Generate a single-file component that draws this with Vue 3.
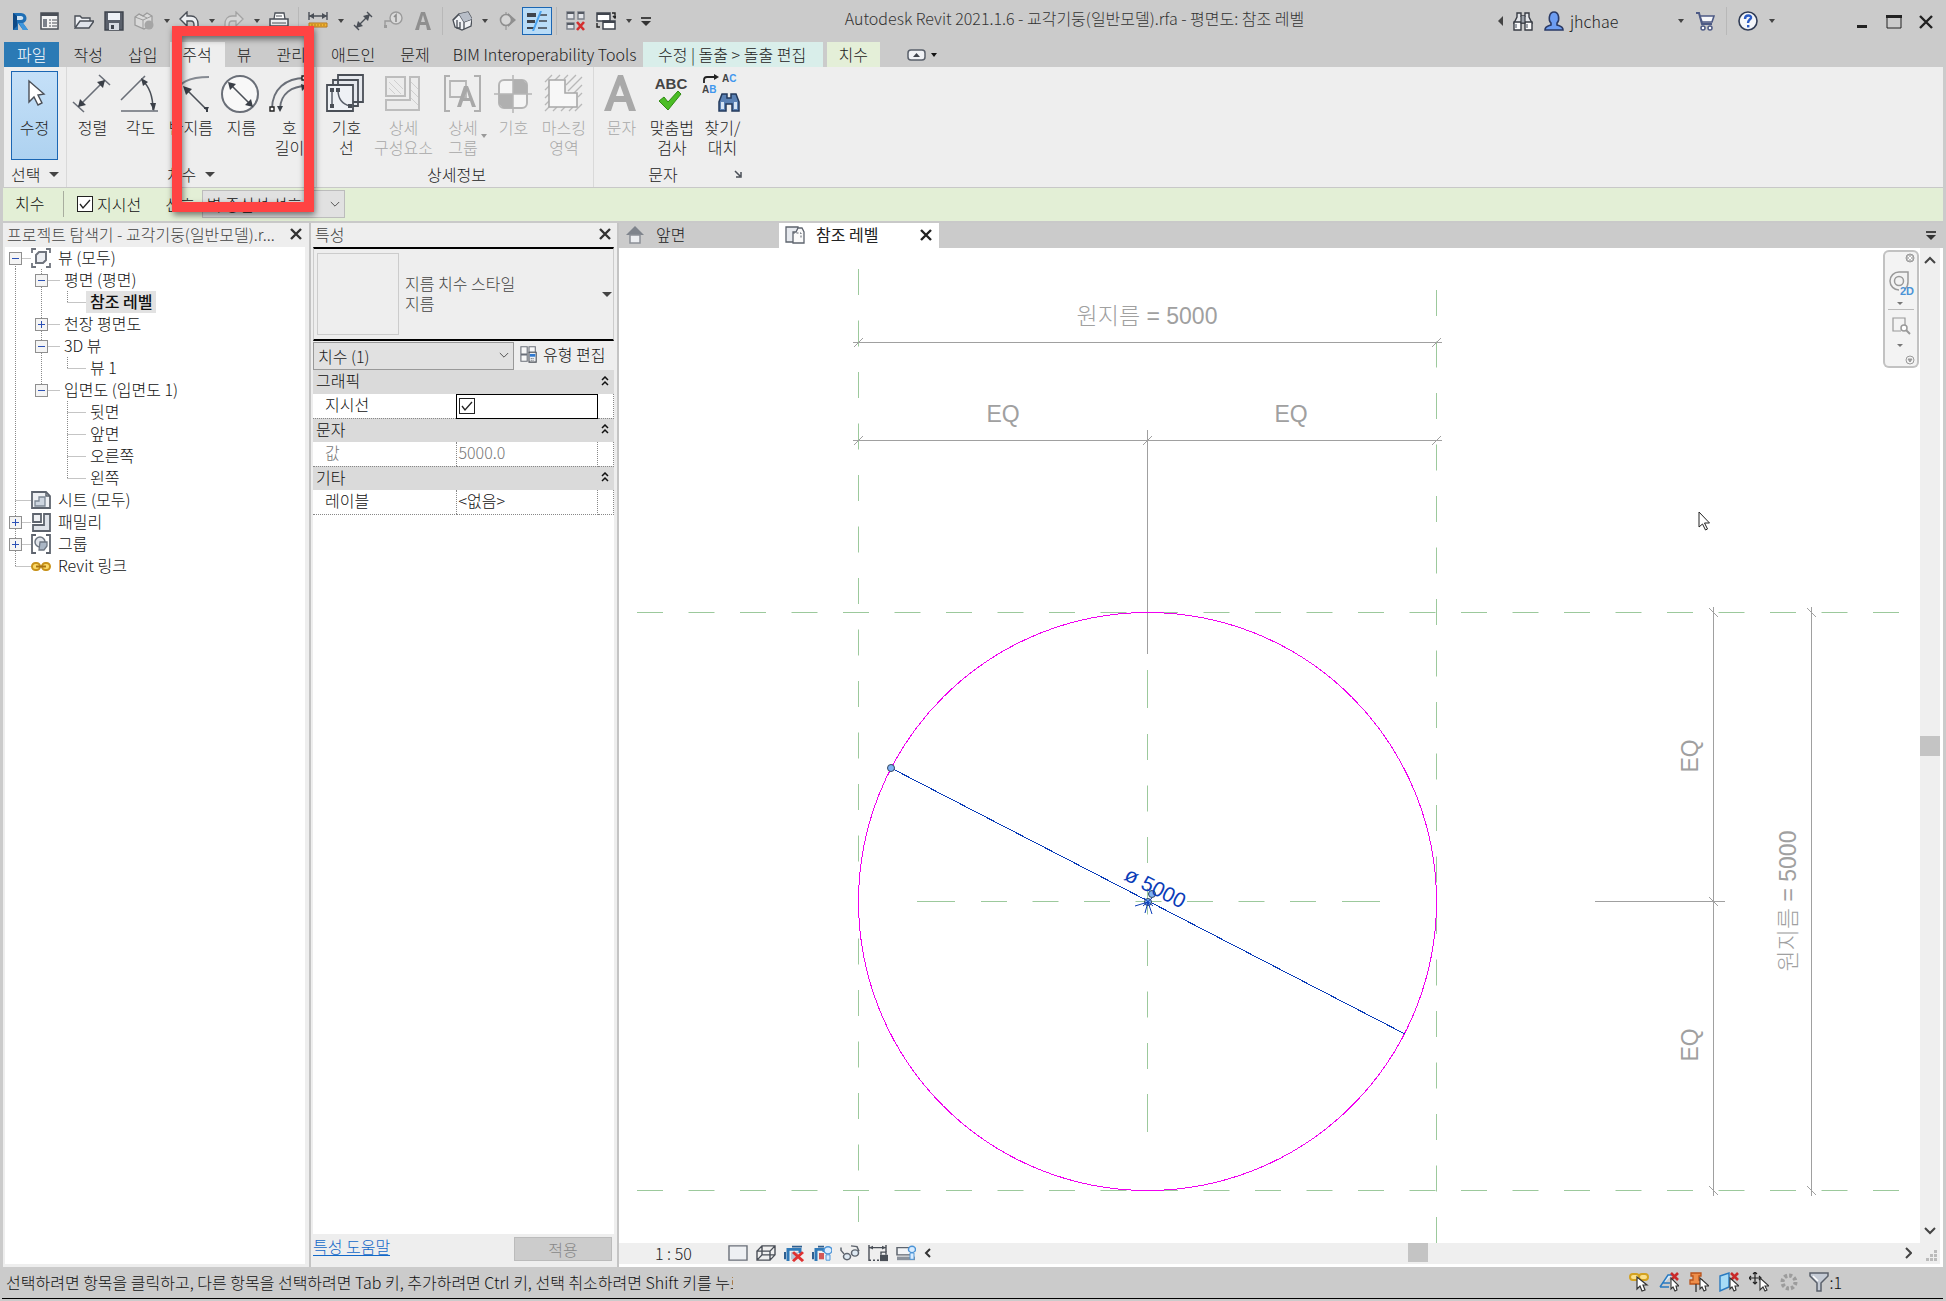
<script setup>
import { ref } from 'vue'

const glyphs = {
  revit: '<path d="M3 2h8c7 0 7 9 2 10l5 7h-5l-5-7v7H3z" fill="#1f6fb5"/><path d="M3 2l4 3v10l-4 4z" fill="#0f4a86"/><path d="M7 5h4c3 0 3 4 0 4H7z" fill="#cfe2f2"/><path d="M9 12l4 7h5l-5-7z" fill="#3f97dd"/>',
  window: '<path d="M1 2h17v16H1z" fill="#f4f4f4" stroke="#4a4f57" stroke-width="1.500"/><path d="M1 2h17v3H1z" fill="#4a4f57"/><path d="M3 8h4v8H3z" fill="#7b818b"/><path d="M9 9h2m1 0h5M9 12h2m1 0h5M9 15h2m1 0h5" stroke="#4a4f57"/>',
  open: '<path d="M1 16V5h5l2 2h8v3" fill="#eef0f4" stroke="#4a4f57" stroke-width="1.4"/><path d="M1 17l5-7h14l-5 7z" fill="#dfe3ea" stroke="#4a4f57" stroke-width="1.4"/>',
  save: '<path d="M1 1h18v18H1z" fill="#5a606b" stroke="#3f444d" stroke-width="1.4"/><path d="M4 2h12v7H4z" fill="#eef1f6"/><path d="M5 12h10v7H5z" fill="#d6dae1"/><path d="M7 14h3v4H7z" fill="#3f444d"/>',
  cloud: '<path d="M1 6l4-3 4 2 4-3 5 3v8l-8 5-9-4z" fill="#d9d9d9" stroke="#9b9b9b" stroke-width="1.3"/><path d="M1 6l8 3v9M9 9l9-4M5 3l8 4" fill="none" stroke="#9b9b9b"/><circle cx="15" cy="14" r="4.5" fill="#a5a5a5"/>',
  undo: '<path d="M1 8l7-7v4h4c4 0 7 3 7 8v4h-4v-3c0-3-1-4-3-4H8v5z" fill="#eef0f3" stroke="#4a4f57" stroke-width="1.4"/>',
  redo: '<path d="M19 8l-7-7v4H8c-4 0-7 3-7 8v4h4v-3c0-3 1-4 3-4h4v5z" fill="#d6d6d6" stroke="#a3a3a3" stroke-width="1.3"/>',
  print: '<path d="M5 8l1-6h9l1 6" fill="#fff" stroke="#4a4f57" stroke-width="1.3"/><path d="M1 8h18v7H1z" fill="#eceef1" stroke="#4a4f57" stroke-width="1.5"/><path d="M3 12h14M7 5h6" stroke="#4a4f57"/>',
  measure: '<path d="M1 5h18M1 1v8M19 1v8" stroke="#4a4f57" stroke-width="1.4"/><path d="M1 5l5-3v6zM19 5l-5-3v6z" fill="#4a4f57"/><path d="M1 12h18v4H1z" fill="#f2b632" stroke="#b7791f"/><path d="M4 13v2m3-2v2m3-2v2m3-2v2m3-2v2" stroke="#b7791f"/>',
  aligned: '<path d="M3 17L17 3M1 14l5 5M14 1l5 5" stroke="#4a4f57" stroke-width="1.4"/><path d="M3 17l2-7 5 5zM17 3l-2 7-5-5z" fill="#4a4f57"/>',
  tag: '<circle cx="13" cy="7" r="6" fill="#dadada" stroke="#9b9b9b" stroke-width="1.4"/><path d="M11 6l2-2v7" fill="none" stroke="#8d8d8d" stroke-width="1.6"/><path d="M8 10H2v5" fill="none" stroke="#9b9b9b" stroke-width="1.4"/><path d="M1 14h3v3H1z" fill="#9b9b9b"/>',
  letter: '<path d="M2 19L8 1h4l6 18h-4l-1-5H7l-1 5zM8 11h4l-2-7z" fill="#8f8f8f"/>',
  house: '<path d="M1 9l6-6 9-2 4 7-1 7-9 4-7-3z" fill="#f0f2f5" stroke="#4a4f57" stroke-width="1.3"/><path d="M1 9l6-6 5 8 8-3M12 11v7M5 9v8h3v-6" fill="none" stroke="#4a4f57" stroke-width="1.3"/><path d="M7 3l9-2 4 7-8 3z" fill="#b8bec8"/>',
  section: '<path d="M11 2l8 7-8 7z" fill="#8f8f8f"/><circle cx="9" cy="9" r="5.5" fill="#d6d6d6" stroke="#8f8f8f" stroke-width="1.6"/><path d="M9 1v3m0 11v4" stroke="#8f8f8f"/>',
  thin: '<path d="M0 2h9v4H0zM0 9h8v3H0zM0 16h7v2H0z" fill="#3f444d"/><path d="M13 4h7M12 10h8M11 17h9" stroke="#3f444d" stroke-width="1.6"/><path d="M14 0L6 20" stroke="#4aa3f0" stroke-width="2"/>',
  closeHidden: '<path d="M1 1h7v7H1zM12 1h6v7h-6zM1 12h7v6H1z" fill="#e4e6ea" stroke="#7a7f88" stroke-width="1.4"/><path d="M1 2h7M12 2h6M1 13h7" stroke="#555a63" stroke-width="2"/><path d="M11 11l7 8m0-8l-7 8" stroke="#d42f2f" stroke-width="2.6"/>',
  switchWin: '<path d="M1 2h13v8H1z" fill="#fff" stroke="#3f444d" stroke-width="1.5"/><path d="M1 3h13" stroke="#3f444d" stroke-width="2"/><path d="M7 10h12v8H7z" fill="#fff" stroke="#3f444d" stroke-width="1.5"/><path d="M7 11h12" stroke="#3f444d" stroke-width="2"/><path d="M16 2h3v5m-2-2l2 2 1-2M1 12v4h3" fill="none" stroke="#222" stroke-width="1.4"/>',
  binoc: '<path d="M4 6V2h4v3h4V2h4v4l3 6H1z" fill="#e3e5e9" stroke="#383c44" stroke-width="1.4"/><path d="M1 11h7v8H1zM12 11h7v8h-7z" fill="#fafafa" stroke="#383c44" stroke-width="1.400"/><path d="M8 5v7h4V5" fill="#9ea3ab" stroke="#383c44" stroke-width="1.200"/><path d="M3 13v4M14 13v4" stroke="#9ea3ab" stroke-width="2"/>',
  user: '<path d="M1 19c0-4 4-4 6-5v-2C4 9 5 1 10 1s6 8 3 11v2c2 1 6 1 6 5z" fill="#6d9df2" stroke="#2a3a66" stroke-width="1.6"/>',
  cart: '<path d="M1 2h3l3 11h10" fill="none" stroke="#4d5a85" stroke-width="2"/><path d="M5 5h14l-2 6H7z" fill="#f6f7fa" stroke="#4d5a85" stroke-width="1.6"/><circle cx="8" cy="17" r="2" fill="#fff" stroke="#4d5a85" stroke-width="1.5"/><circle cx="15" cy="17" r="2" fill="#fff" stroke="#4d5a85" stroke-width="1.5"/>',
  help: '<circle cx="10" cy="10" r="9" fill="#f4f6fa" stroke="#2f3b55" stroke-width="1.6"/><path d="M7 8c0-5 7-4 6-1-1 2-3 2-3 5" fill="none" stroke="#2a5bc4" stroke-width="2.4"/><path d="M9 14h2.400v2.400H9z" fill="#2a5bc4"/>',
  views: '<path d="M1 5V1h4M15 1h4v4M19 15v4h-4M5 19H1v-4" fill="none" stroke="#70757e" stroke-width="1.8"/><path d="M5 7l3-3h7v8l-3 3H5z" fill="#eceef2" stroke="#70757e" stroke-width="2"/>',
  sheet: '<path d="M1 2h14l4 4v12H1z" fill="#eef0f3" stroke="#5e646e" stroke-width="1.8"/><path d="M15 2v4h4" fill="none" stroke="#5e646e" stroke-width="1.5"/><path d="M4 16v-5h4V7h6v9z" fill="#cdd5df" stroke="#7c8794" stroke-width="1.3"/>',
  family: '<path d="M2 2h8v8H2z" fill="#eef0f3" stroke="#5e646e" stroke-width="1.8"/><path d="M13 2h6v17H2v-6h11z" fill="#dfe3e9" stroke="#5e646e" stroke-width="1.8"/>',
  group: '<path d="M5 1H1v18h4M15 1h4v18h-4" fill="none" stroke="#5e646e" stroke-width="1.8"/><circle cx="9" cy="8" r="5" fill="#dfe3e9" stroke="#6e7783" stroke-width="1.5"/><path d="M9 8h7v4l-3 4H8z" fill="#aab6c5" stroke="#6e7783" stroke-width="1.3"/>',
  link: '<rect x="1" y="7" width="8" height="7" rx="3.500" fill="#fbd968" stroke="#c8921a" stroke-width="2"/><rect x="11" y="7" width="8" height="7" rx="3.500" fill="#fbd968" stroke="#c8921a" stroke-width="2"/><path d="M5 10.500h10" stroke="#a87412" stroke-width="2"/>',
  home: '<path d="M10 1l9 9H1z" fill="#7f848c"/><path d="M5 10h10v8H5z" fill="#eceef1" stroke="#8c9097" stroke-width="1.5"/>',
  plan: '<path d="M1 2h12v15H1z" fill="#e7eaef" stroke="#5e646e" stroke-width="1.3"/><path d="M8 7h3l2-4h4l2 4v11H8z" fill="#fafafa" stroke="#5e646e" stroke-width="1.3"/><path d="M8 8h8v5" fill="none" stroke="#5e646e" stroke-dasharray="2 1.500"/>',
  editType: '<path d="M1 2h7v8H1zM10 2h7v6h-7zM1 11h7v7H1z" fill="#f7f7f7" stroke="#6a6f78" stroke-width="1.2"/><path d="M10 8h8v11h-8z" fill="#eceef1" stroke="#4a4f57" stroke-width="1.2"/><path d="M11 10h6v3h-6z" fill="#2f79d0"/><path d="M12 15h1m1 0h1m-3 2h1m1 0h1" stroke="#4a4f57"/>',
  detail: '<path d="M1 2h18v16H1z" fill="#eef0f3" stroke="#6a6f78" stroke-width="1.400"/>',
  style: '<path d="M1 8h13v10H1zM1 8l5-6h13v10l-5 6M14 8l5-6M6 2v10h13M6 12l-5 6" fill="none" stroke="#4a4f57" stroke-width="1.4"/>',
  crop: '<path d="M4 19V6h12v4" fill="none" stroke="#2f79b8" stroke-width="3"/><path d="M1 9v8M8 3h10" stroke="#2f5f90" stroke-width="2"/><path d="M7 9h7v8H7z" fill="#b9c7d8"/><path d="M9 9l10 10M19 9L9 19" stroke="#e03131" stroke-width="3"/>',
  cropShow: '<path d="M4 19V6h8v3" fill="none" stroke="#2f79b8" stroke-width="3"/><path d="M1 9v8M6 3h6" stroke="#2f5f90" stroke-width="2"/><path d="M7 10h5v7H7z" fill="#d35757"/><circle cx="16" cy="7" r="4" fill="#d9ecff" stroke="#4b93d6" stroke-width="1.5"/><path d="M14 12h4v6h-4z" fill="#d9ecff" stroke="#4b93d6"/>',
  glasses: '<path d="M1 4v3l3 4M11 2l6 1 2 5" fill="none" stroke="#5e646e" stroke-width="1.500"/><circle cx="7" cy="14" r="3.500" fill="#dfeaf3" stroke="#5e646e" stroke-width="1.500"/><circle cx="15" cy="10" r="3.500" fill="#dfeaf3" stroke="#5e646e" stroke-width="1.500"/>',
  lockDim: '<path d="M1 1v18M18 1v8M1 4h17" stroke="#4a4f57" stroke-width="1.400"/><path d="M1 4l4-2v4zM18 4l-4-2v4z" fill="#4a4f57"/><path d="M1 18h10" stroke="#4a4f57" stroke-width="1.500" stroke-dasharray="2 2"/><path d="M12 12h8v7h-8z" fill="#4a4f57"/><path d="M13 12V9h5v3" fill="none" stroke="#4a4f57" stroke-width="1.400"/>',
  constraint: '<path d="M1 4h14v8H1z" fill="#f2f4f7" stroke="#5e646e" stroke-width="1.500"/><path d="M1 14h18v4H1z" fill="#8b929c"/><circle cx="16" cy="6" r="3.500" fill="#d9ecff" stroke="#4b93d6" stroke-width="1.500"/><path d="M14 10h4v7h-4z" fill="#d9ecff" stroke="#4b93d6"/>',
  selLink: '<rect x="1" y="2" width="9" height="6" rx="3" fill="#fbe08a" stroke="#d3a11f" stroke-width="2"/><rect x="10" y="2" width="9" height="6" rx="3" fill="#fbe08a" stroke="#d3a11f" stroke-width="2"/><path d="M8 5v12l3-3 2 5 3-1-2-5h4z" fill="#fff" stroke="#333" stroke-width="1.200"/>',
  selUnder: '<path d="M1 15L9 3h4M1 15h9M3 11h8" fill="#d9efff" stroke="#2a7ac0" stroke-width="1.500"/><path d="M12 1l7 7m0-7l-7 7" stroke="#c92a2a" stroke-width="2.600"/><path d="M12 6v11l2-2 2 4 2-1-1-4h3z" fill="#fff" stroke="#333" stroke-width="1.100"/>',
  selPin: '<path d="M2 1h10v3h-2v4h3v4H1V8h3V4H2z" fill="#ee8e4a" stroke="#b9531b" stroke-width="1.300"/><path d="M7 12v8" stroke="#444" stroke-width="1.500"/><path d="M11 6v11l2-2 2 4 2-1-1-4h4z" fill="#fff" stroke="#333" stroke-width="1.100"/>',
  selFace: '<path d="M1 4l9-3v14l-9 4z" fill="#a8dcf7" stroke="#2a7ac0" stroke-width="1.400"/><path d="M12 1l7 7m0-7l-7 7" stroke="#c92a2a" stroke-width="2.600"/><path d="M11 6v11l2-2 2 4 2-1-1-4h4z" fill="#fff" stroke="#333" stroke-width="1.100"/>',
  drag: '<path d="M6 0v12M0 6h12M4 2l2-2 2 2M4 10l2 2 2-2M2 4L0 6l2 2M10 4l2 2-2 2" fill="none" stroke="#222" stroke-width="1.200"/><path d="M11 6v12l3-3 2 4 2-1-2-4h4z" fill="#fff" stroke="#333" stroke-width="1.100"/>',
  busy: '<circle cx="10" cy="10" r="6.500" fill="none" stroke="#9c9c9c" stroke-width="4" stroke-dasharray="3 2"/>',
  filter: '<path d="M1 1h18v3l-7 7v8H8v-8L1 4z" fill="#c5cbd5" stroke="#5a606b" stroke-width="1.500"/><path d="M4 4l5 5" stroke="#fff" stroke-width="1.500"/>',
}

const big = {
  arrow: '<path d="M14 7l0 21 5-5 4 8 4-2-4-8 6-1z" fill="#fff" stroke="#4a4f57" stroke-width="1.400"/>',
  align: '<path d="M6 33L33 6M1 28l11 10M27 1l11 10" stroke="#6a6f78" stroke-width="1.600"/><path d="M6 33l2-8 6 6zM33 6l-2 8-6-6z" fill="#3a3f47"/>',
  angle: '<path d="M1 26L25 2M1 37h37" stroke="#6a6f78" stroke-width="1.600" fill="none"/><path d="M22 6c8 7 11 17 11 30" stroke="#4a4f57" stroke-width="1.600" fill="none"/><path d="M21 4l7 4-5 4zM30 29h6l-2 8z" fill="#3a3f47"/>',
  radius: '<path d="M4 20C7 8 19 3 38 3" fill="none" stroke="#858a92" stroke-width="2"/><path d="M14 14l22 22" stroke="#4a4f57" stroke-width="1.600"/><path d="M12 12l9 3-6 6zM38 33h-5v2h2v3h2v-3z" fill="#3a3f47"/>',
  diameter: '<circle cx="19" cy="20" r="18" fill="#f8f8f8" stroke="#6a6f78" stroke-width="2"/><path d="M9 10l21 21" stroke="#4a4f57" stroke-width="1.600"/><path d="M7 8l8 2-6 6zM32 33l-8-2 6-6z" fill="#3a3f47"/>',
  arc: '<path d="M3 35C3 15 17 4 36 4M11 34C12 20 22 12 38 12" fill="none" stroke="#6a6f78" stroke-width="1.800"/><path d="M1 33h4v4H1zM33 2h4v4h-4z" fill="#fff" stroke="#222" stroke-width="1.400"/><path d="M8 32h6l-3 6zM32 10l6 2-5 5z" fill="#3a3f47"/>',
  symline: '<path d="M12 1h25v27H12zM7 6h25v26H7z" fill="#e6e9ee" stroke="#4a4f57" stroke-width="1.800"/><path d="M1 11h26v26H1z" fill="#eef1f5" stroke="#4a4f57" stroke-width="1.800"/><path d="M6 15v16M12 16c0 8 4 14 12 16" stroke="#5a606b" stroke-width="1.500" fill="none"/><path d="M4 14h4v4H4zM4 30h4v4H4zM10 14h4v4h-4zM22 30h4v4h-4z" fill="#4a4f57"/><path d="M15 6h2m3 0h2m3 0h2M10 6h0" stroke="#4a4f57" stroke-width="2"/>',
  component: '<path d="M3 3h19v19H3zM27 3h9v33H3V26h24z" fill="#ececec" stroke="#bdbdbd" stroke-width="2"/><path d="M6 8l12 12M6 14l6 6M11 6l9 9M28 8l7 7M28 16l7 7M28 24l7 7" stroke="#cfcfcf"/>',
  dgroup: '<path d="M7 2H2v35h5M31 2h6v35h-6" fill="none" stroke="#b0b0b0" stroke-width="2"/><path d="M7 7h16v16H7z" fill="none" stroke="#b5b5b5" stroke-width="1.800"/><path d="M14 33l7-21h4l8 21h-4l-2-6h-7l-2 6zM21 24h5l-2-7z" fill="#a8a8a8"/>',
  symbol: '<rect x="6" y="6" width="28" height="28" rx="5" fill="#f5f5f5" stroke="#b5b5b5" stroke-width="2"/><path d="M20 6h10l4 4v10H20zM6 20h14v14H10l-4-4z" fill="#b0b0b0"/><path d="M20 1v38M1 20h38" stroke="#b5b5b5" stroke-width="1.500"/>',
  mask: '<path d="M1 8l7-7M1 16L16 1M8 9l8-8M20 5l4-4M22 11L32 1M24 17L38 3M28 21l10-10M34 23l4-4M1 24l4-4M1 31l4-4M1 37l8-8M9 37l4-4M17 37l4-4M25 37l4-4M31 37l7-7" stroke="#b8b8b8" stroke-width="1.300"/><path d="M5 6h16v13h12v14H5z" fill="#f7f7f7" stroke="#a8a8a8" stroke-width="1.600"/>',
  text: '<path d="M3 37L17 1h5l13 36h-7l-3-9H13l-3 9zM15 22h8l-4-11z" fill="#a9a9a9"/>',
  spell: '<path d="M7 27l5-4 4 5L26 17l3 3-13 16z" fill="#4bbd25" stroke="#2f8a12" stroke-width="1"/>',
  find: '<path d="M2 9V6c0-2 1-3 3-3h9" fill="none" stroke="#222" stroke-width="1.800"/><path d="M12 0l5 3-5 3z" fill="#222"/><path d="M20 20h5v4h4v-4h5l3 8v9h-7v-7h-6v7h-7v-9z" fill="#5b82b5" stroke="#233a5c" stroke-width="1.500"/><path d="M19 28h3v7h-3zM32 28h3v7h-3z" fill="#d5e4f4"/>',
}

const quick = [
  { t: 'icon', g: 'revit' }, { t: 'icon', g: 'window' }, { t: 'space' },
  { t: 'icon', g: 'open' }, { t: 'icon', g: 'save' }, { t: 'icon', g: 'cloud' }, { t: 'drop' },
  { t: 'icon', g: 'undo' }, { t: 'drop' }, { t: 'icon', g: 'redo' }, { t: 'drop' }, { t: 'icon', g: 'print' }, { t: 'sep' },
  { t: 'icon', g: 'measure' }, { t: 'drop' }, { t: 'icon', g: 'aligned' }, { t: 'icon', g: 'tag' }, { t: 'icon', g: 'letter' }, { t: 'sep' },
  { t: 'icon', g: 'house' }, { t: 'drop' }, { t: 'icon', g: 'section' }, { t: 'icon', g: 'thin', on: true }, { t: 'sep' },
  { t: 'icon', g: 'closeHidden' }, { t: 'icon', g: 'switchWin' }, { t: 'drop' }, { t: 'more' },
]

const tabs = [
  { n: '파일', c: 'file' }, { n: '작성' }, { n: '삽입' }, { n: '주석', c: 'current' }, { n: '뷰' }, { n: '관리' },
  { n: '애드인' }, { n: '문제' }, { n: 'BIM Interoperability Tools', c: 'bim' },
  { n: '수정 | 돌출 > 돌출 편집', c: 'modify' }, { n: '치수', c: 'dims' },
]

const panels = [
  { n: '선택', drop: true, c: 'select', tools: [{ g: 'arrow', l: ['수정'], on: true }] },
  { n: '치수', drop: true, c: 'dimension', tools: [
    { g: 'align', l: ['정렬'] }, { g: 'angle', l: ['각도'] }, { g: 'radius', l: ['반지름'], size: 'mid' }, { g: 'diameter', l: ['지름'] }, { g: 'arc', l: ['호', '길이'] }] },
  { n: '상세정보', c: 'detail', tools: [
    { g: 'symline', l: ['기호', '선'] }, { g: 'component', l: ['상세', '구성요소'], off: true, size: 'wide' }, { g: 'dgroup', l: ['상세', '그룹'], off: true, more: true, size: 'mid' },
    { g: 'symbol', l: ['기호'], off: true }, { g: 'mask', l: ['마스킹', '영역'], off: true, size: 'mid' }] },
  { n: '문자', c: 'text', launch: true, tools: [
    { g: 'text', l: ['문자'], off: true }, { g: 'spell', l: ['맞춤법', '검사'], size: 'mid' }, { g: 'find', l: ['찾기/', '대치'] }] },
]

// Guide cells: v = line through, m/p = minus/plus box, t = branch, e = last branch, '' = blank
const tree = [
  { cells: ['mf'], icon: 'views', n: '뷰 (모두)' },
  { cells: ['v', 'm'], n: '평면 (평면)' },
  { cells: ['v', 'v', 'e'], n: '참조 레벨', active: true },
  { cells: ['v', 'p'], n: '천장 평면도' },
  { cells: ['v', 'm'], n: '3D 뷰' },
  { cells: ['v', 'v', 'e'], n: '뷰 1' },
  { cells: ['v', 'ml'], n: '입면도 (입면도 1)' },
  { cells: ['v', '', 't'], n: '뒷면' },
  { cells: ['v', '', 't'], n: '앞면' },
  { cells: ['v', '', 't'], n: '오른쪽' },
  { cells: ['v', '', 'e'], n: '왼쪽' },
  { cells: ['t'], icon: 'sheet', n: '시트 (모두)' },
  { cells: ['p'], icon: 'family', n: '패밀리' },
  { cells: ['p'], icon: 'group', n: '그룹' },
  { cells: ['e'], icon: 'link', n: 'Revit 링크' },
]
const guide = (c) => {
  if (!c) return ''
  if (c === 'v') return 'M12.5 0V22'
  const stem = c === 'mf' ? 'M12.5 11V22' : c === 'e' || c === 'ml' ? 'M12.5 0V11' : 'M12.5 0V22'
  return stem + 'M12.5 11.500H31'
}

const leader = ref(true)
const showLeader = ref(true)
const viewIcons = ['detail', 'style', 'crop', 'cropShow', 'glasses', 'lockDim', 'constraint']
const statusIcons = ['selLink', 'selUnder', 'selPin', 'selFace', 'drag', 'busy', 'filter']
</script>

<template>
  <div class="app">
    <header class="titlebar">
      <div class="quick">
        <template v-for="(q, i) in quick" :key="i">
          <button v-if="q.t === 'icon'" class="qbtn" :class="{ on: q.on }"><svg width="20" height="20" viewBox="0 0 20 20" fill="none" v-html="glyphs[q.g]" /></button>
          <button v-else-if="q.t === 'drop'" class="qdrop"><i class="caret" /></button>
          <span v-else-if="q.t === 'sep'" class="qsep" />
          <span v-else-if="q.t === 'space'" class="qspace" />
          <button v-else class="qmore"><i class="caret-bar" /></button>
        </template>
      </div>
      <h1 class="title">Autodesk Revit 2021.1.6 - 교각기둥(일반모델).rfa - 평면도: 참조 레벨</h1>
      <div class="account">
        <button class="back"><i class="caret-left" /></button>
        <button class="acc"><svg width="20" height="20" viewBox="0 0 20 20" fill="none" v-html="glyphs.binoc" /></button>
        <button class="acc user"><svg width="20" height="20" viewBox="0 0 20 20" fill="none" v-html="glyphs.user" /><span>jhchae</span></button>
        <button class="qdrop"><i class="caret" /></button>
        <button class="acc"><svg width="20" height="20" viewBox="0 0 20 20" fill="none" v-html="glyphs.cart" /></button>
        <span class="qsep" />
        <button class="acc"><svg width="20" height="20" viewBox="0 0 20 20" fill="none" v-html="glyphs.help" /></button>
        <button class="qdrop"><i class="caret" /></button>
      </div>
      <div class="winbtns">
        <button><svg width="16" height="16"><path d="M3 12h10v3H3z" fill="#222" /></svg></button>
        <button><svg width="16" height="16"><path d="M1 3h14v12H1z" fill="none" stroke="#222" /><path d="M0 2h16v3H0z" fill="#222" /></svg></button>
        <button><svg width="16" height="16"><path d="M2 3l12 12M14 3L2 15" stroke="#222" stroke-width="2.400" /></svg></button>
      </div>
    </header>

    <nav class="tabs">
      <button v-for="t in tabs" :key="t.n" class="tab" :class="t.c">{{ t.n }}</button>
      <button class="ribbon-toggle">
        <svg width="30" height="14" viewBox="0 0 30 14"><rect x="1" y="2" width="17" height="10" rx="3" fill="#f0f2f6" stroke="#5a606b" stroke-width="1.500" /><path d="M6 9l3.500-4L13 9z" fill="#3f444d" /><path d="M24 5h6l-3 4z" fill="#111" /></svg>
      </button>
    </nav>

    <section class="ribbon">
      <div v-for="p in panels" :key="p.n" class="panel" :class="p.c">
        <div class="tools">
          <button v-for="t in p.tools" :key="t.g" class="tool" :class="[t.size, { on: t.on, off: t.off }]" :disabled="t.off">
            <svg width="40" height="40" viewBox="0 0 40 40" fill="none">
              <g v-html="big[t.g]" />
              <text v-if="t.g === 'spell'" x="19" y="15" class="abc" text-anchor="middle">ABC</text>
              <g v-if="t.g === 'find'" class="ab"><text x="20" y="8">A<tspan fill="#3f97ee">C</tspan></text><text x="0" y="19">A<tspan fill="#3f97ee">B</tspan></text></g>
            </svg>
            <span v-for="l in t.l" :key="l">{{ l }}</span>
            <i v-if="t.more" class="caret more" />
          </button>
        </div>
        <div class="panel-name">
          <span>{{ p.n }}</span><i v-if="p.drop" class="caret big" />
          <svg v-if="p.launch" class="launch" width="8" height="8"><path d="M1 1l5 5M7 2v5H2" fill="none" stroke="#4a4f57" stroke-width="1.500" /></svg>
        </div>
      </div>
    </section>

    <section class="options">
      <strong class="ctx">치수</strong>
      <label class="check"><input v-model="leader" type="checkbox"><span>지시선</span></label>
      <label class="prefer"><span>선호:</span>
        <select><option>벽 중심선 선호</option></select>
      </label>
    </section>

    <main class="work">
      <aside class="browser">
        <div class="dock-head"><span>프로젝트 탐색기 - 교각기둥(일반모델).r...</span><button class="x"><svg width="14" height="14"><path d="M2 2l10 10M12 2L2 12" stroke="#333" stroke-width="2.400" /></svg></button></div>
        <ul class="tree">
          <li v-for="r in tree" :key="r.n + r.cells.length">
            <svg v-for="(c, i) in r.cells" :key="i" class="cell" width="26" height="22" viewBox="0 0 26 22">
              <path :d="guide(c)" fill="none" stroke="#8a8a8a" stroke-dasharray="1 1" />
              <g v-if="c[0] === 'm' || c[0] === 'p'">
                <rect x="6.500" y="5.500" width="12" height="12" fill="#f4f4f4" stroke="#8f8f8f" />
                <path d="M9 11.500h7" stroke="#2b50b5" /><path v-if="c[0] === 'p'" d="M12.500 8v7" stroke="#2b50b5" />
              </g>
            </svg>
            <svg v-if="r.icon" class="ticon" width="20" height="20" viewBox="0 0 20 20" fill="none" v-html="glyphs[r.icon]" />
            <span class="node" :class="{ active: r.active }">{{ r.n }}</span>
          </li>
        </ul>
      </aside>

      <aside class="props">
        <div class="dock-head"><span>특성</span><button class="x"><svg width="14" height="14"><path d="M2 2l10 10M12 2L2 12" stroke="#333" stroke-width="2.400" /></svg></button></div>
        <button class="type">
          <span class="thumb" />
          <span class="type-name">지름 치수 스타일<br>지름</span>
          <i class="caret big" />
        </button>
        <div class="filter">
          <select aria-label="치수"><option>치수 (1)</option></select>
          <button class="edit"><svg width="18" height="20" viewBox="0 0 20 20" fill="none" v-html="glyphs.editType" /><span>유형 편집</span></button>
        </div>
        <table class="grid">
          <colgroup><col class="c1"><col><col class="c3"></colgroup>
          <tbody>
            <tr class="grp"><th colspan="2">그래픽</th><td><svg width="8" height="10"><path d="M1 4l3-3 3 3M1 9l3-3 3 3" fill="none" stroke="#111" stroke-width="1.500" /></svg></td></tr>
            <tr><th><label for="leader">지시선</label></th><td class="focus"><input id="leader" v-model="showLeader" type="checkbox"></td><td /></tr>
            <tr class="grp"><th colspan="2">문자</th><td><svg width="8" height="10"><path d="M1 4l3-3 3 3M1 9l3-3 3 3" fill="none" stroke="#111" stroke-width="1.500" /></svg></td></tr>
            <tr class="dim"><th>값</th><td>5000.0</td><td /></tr>
            <tr class="grp"><th colspan="2">기타</th><td><svg width="8" height="10"><path d="M1 4l3-3 3 3M1 9l3-3 3 3" fill="none" stroke="#111" stroke-width="1.500" /></svg></td></tr>
            <tr><th>레이블</th><td>&lt;없음&gt;</td><td /></tr>
          </tbody>
        </table>
        <div class="void" />
        <footer class="apply"><a href="#">특성 도움말</a><button disabled>적용</button></footer>
      </aside>

      <section class="view">
        <div class="doc-tabs">
          <button class="doc"><svg width="20" height="20" viewBox="0 0 20 20" fill="none" v-html="glyphs.home" /><span>앞면</span></button>
          <div class="doc open"><svg width="20" height="20" viewBox="0 0 20 20" fill="none" v-html="glyphs.plan" /><span>참조 레벨</span><button class="x"><svg width="14" height="14"><path d="M2 2l10 10M12 2L2 12" stroke="#222" stroke-width="2.400" /></svg></button></div>
          <button class="doc-more"><i class="caret-bar" /></button>
        </div>
        <div class="stage">
          <svg class="drawing" viewBox="619 248 1301 995" preserveAspectRatio="xMidYMid meet" fill="none">
            <g class="ref-line">
              <path d="M858.500 269V1222" /><path d="M1436.500 290V1243" />
              <path d="M637 612.500H1899" /><path d="M637 1190.500H1899" />
              <path d="M981 901.500H1316" /><path d="M1147.500 734V1070" />
              <path class="solid" d="M917 901.500H955M1342 901.500H1380M1147.500 670V708M1147.500 1094V1132" />
            </g>
            <g class="dim-line">
              <path d="M853 342.500H1442M853 440.500H1442M1147.500 430V654" />
              <path d="M1713.500 607V1196M1811.500 607V1196M1595 901.500H1725" />
              <path d="M854 347l9-9M1432 347l9-9M854 445l9-9M1143 445l9-9M1432 445l9-9" />
              <path d="M1709 608l9 9M1807 608l9 9M1709 897l9 9M1709 1186l9 9M1807 1186l9 9" />
            </g>
            <g class="dim-text">
              <text x="1147" y="324">원지름 = 5000</text>
              <text x="1003" y="422">EQ</text><text x="1291" y="422">EQ</text>
              <text transform="translate(1698 756) rotate(-90)">EQ</text>
              <text transform="translate(1698 1045) rotate(-90)">EQ</text>
              <text transform="translate(1796 901) rotate(-90)">원지름 = 5000</text>
            </g>
            <circle class="crisp" cx="1147.500" cy="901.500" r="289" stroke="#f000f0" />
            <path class="crisp" d="M891 768L1405 1034" stroke="#0a3cb8" />
            <g stroke="#33475f" fill="#7fb2f5"><circle cx="891" cy="768" r="3.500" /><circle cx="1148" cy="902" r="3.500" /><circle cx="1152" cy="894" r="3.500" /></g>
            <path d="M1148 902l-13 4M1148 902l4 12M1148 902l-3 11M1144 898l9 8M1152 898l-9 8" stroke="#0a3cb8" />
            <text class="dia" transform="translate(1152 894) rotate(27)">ø 5000</text>
            <path d="M1699 512v15l3.500-3 3 6 2-1-3-6h5z" fill="#fff" stroke="#222" />
          </svg>
          <div class="navbar">
            <svg width="36" height="118" viewBox="0 0 36 118" fill="none" stroke="#9a9a9a">
              <circle cx="27" cy="8" r="4" fill="#bdbdbd" /><path d="M25 6l4 4m0-4l-4 4" stroke="#fff" />
              <path d="M16 22h9v10a9 9 0 0 1-3 7M16 22a9 9 0 1 0 0 18" stroke-width="1.500" /><circle cx="16" cy="31" r="4.500" stroke-width="1.500" />
              <path d="M14 52h6l-3 3z" fill="#777" stroke="none" /><path d="M5 59.500h26" stroke="#bbb" />
              <path d="M18 81H10V68h12v7" stroke-width="1.200" /><circle cx="21" cy="78" r="3" fill="#fff" stroke-width="1.500" /><path d="M23 80l4 4" stroke-width="2" />
              <path d="M14 94h6l-3 3z" fill="#777" stroke="none" /><circle cx="27" cy="110" r="4" /><path d="M25 109h4l-2 3z" fill="#999" />
              <text x="17" y="45" class="two-d">2D</text>
            </svg>
          </div>
        </div>
        <div class="vscroll">
          <svg width="12" height="8"><path d="M1 7l5-5 5 5" fill="none" stroke="#444" stroke-width="2" /></svg>
          <i class="vthumb" />
          <svg width="12" height="8"><path d="M1 1l5 5 5-5" fill="none" stroke="#444" stroke-width="2" /></svg>
        </div>
        <div class="viewbar">
          <button class="scale">1 : 50</button>
          <button v-for="g in viewIcons" :key="g" class="vbtn"><svg width="20" height="18" viewBox="0 0 20 20" preserveAspectRatio="none" fill="none" v-html="glyphs[g]" /></button>
          <svg class="lt" width="8" height="12"><path d="M6 2L2 6l4 4" fill="none" stroke="#333" stroke-width="2" /></svg>
          <div class="hscroll"><i class="hthumb" /></div>
          <svg width="8" height="12"><path d="M2 1l5 5-5 5" fill="none" stroke="#444" stroke-width="2" /></svg>
        </div>
        <svg class="grip" width="12" height="12"><path d="M8 0h3v3H8zM4 4h3v3H4zM8 4h3v3H8zM0 8h3v3H0zM4 8h3v3H4zM8 8h3v3H8z" fill="#bbb" /></svg>
      </section>
    </main>

    <footer class="status">
      <p class="hint">선택하려면 항목을 클릭하고, 다른 항목을 선택하려면 Tab 키, 추가하려면 Ctrl 키, 선택 취소하려면 Shift 키를 누르십시오.</p>
      <div class="status-icons">
        <button v-for="g in statusIcons" :key="g" class="sbtn"><svg width="20" height="20" viewBox="0 0 20 20" fill="none" v-html="glyphs[g]" /></button>
      </div>
      <span class="count">:1</span>
    </footer>

    <div class="marker" />
  </div>
</template>

<style>
body { margin: 0; background: #cbcbcb; }
</style>

<style scoped>
* { box-sizing: border-box; }
.app { position: relative; display: flex; flex-direction: column; height: 100vh; min-height: 700px; background: #cbcbcb; color: #222; font: 300 16px/20px 'Noto Sans CJK KR', sans-serif; overflow: hidden; }
button { font: inherit; color: inherit; padding: 0; border: 0; background: none; display: flex; align-items: center; justify-content: center; white-space: nowrap; }
select { font: inherit; color: inherit; }
svg { display: block; flex: none; }
input[type='checkbox'] { appearance: none; width: 16px; height: 16px; margin: 0; background: #fff; border: 1px solid #222; flex: none; }
input[type='checkbox']:checked { background: #fff url("data:image/svg+xml,%3Csvg xmlns='http://www.w3.org/2000/svg' viewBox='0 0 14 14'%3E%3Cpath d='M2 7l3 4 7-8' fill='none' stroke='%23222' stroke-width='1.300'/%3E%3C/svg%3E") center / 14px 14px no-repeat; }
.caret { width: 0; height: 0; border: 3px solid transparent; border-top: 4px solid #444; border-bottom: 0; flex: none; }
.caret.big { border-width: 5px 5px 0; }
.caret-left { border: 5px solid transparent; border-right-color: #444; border-left: 0; }
.caret-bar { width: 10px; height: 9px; border-top: 2px solid #444; display: flex; align-items: flex-end; }
.caret-bar::after { content: ''; border: 5px solid transparent; border-top-color: #333; border-bottom: 0; }

.titlebar { display: flex; flex: none; height: 42px; align-items: center; padding-right: 12px; }
.quick { display: flex; align-items: center; padding-left: 5px; }
.qbtn { width: 30px; height: 28px; }
.qbtn.on { background: #b9dcf7; border: 1px solid #1b66b3; }
.qdrop { width: 15px; height: 28px; }
.qsep { width: 1px; height: 28px; margin: 0 4px; background: #b8b8b8; }
.qspace { width: 4px; }
.qmore { width: 20px; height: 28px; }
.title { flex: 1; margin: 0; font: inherit; line-height: 36px; height: 42px; text-align: center; white-space: nowrap; color: #333; }
.account { display: flex; align-items: center; }
.account .qdrop { margin-right: 1px; }
.account .qsep { margin: 0 5px; }
.back { width: 14px; }
.acc { width: 32px; height: 28px; }
.acc.user { width: 134px; padding-left: 5px; justify-content: flex-start; gap: 6px; }
.winbtns { display: flex; gap: 16px; margin-left: 74px; }
.winbtns button { width: 16px; height: 28px; }

.tabs { display: flex; flex: none; height: 25px; padding-left: 4px; }
.tab { padding: 0 13px 2px 12px; height: 25px; }
.tab.file { background: #2b7ab5; color: #fff; padding: 0 13px 2px; margin-right: 2px; }
.tab.current { background: #eee; }
.tab.bim { padding: 0 6px 2px 10px; }
.tab.modify { background: #d9eeea; width: 180px; }
.tab.dims { background: #e4efd8; margin-left: 4px; padding: 0 12px 2px; }
.ribbon-toggle { margin-left: 27px; }

.ribbon { display: flex; flex: none; height: 121px; margin: 0 3px 0 4px; background: #eee; border-bottom: 1px solid #c8c8c8; }
.panel { display: flex; flex-direction: column; justify-content: space-between; padding: 4px 3px 1px; border-right: 1px solid #d9d9d9; }
.panel:last-child { border-right: 0; }
.panel.select { padding: 4px 7px 1px; }
.panel.dimension { padding-left: 1px; }
.panel.detail { padding: 4px 3px 1px 5px; }
.tools { display: flex; }
.tool { position: relative; width: 48px; height: 89px; flex-direction: column; justify-content: flex-start; padding-top: 3px; }
.tool svg { margin-bottom: 3px; }
.tool.mid { width: 53px; }
.tool.wide { width: 66px; }
.tool.off { color: #a8a8a8; }
.tool.on { width: 47px; background: linear-gradient(#c5e0f8, #aed2f0); border: 1px solid #1b66b3; padding-top: 2px; }
.tool .more { position: absolute; right: 2px; top: 63px; border-top-color: #999; }
.abc { font: 700 15px 'Liberation Sans', sans-serif; fill: #444; }
.ab { font: 700 10px 'Liberation Sans', sans-serif; fill: #444; }
.panel-name { position: relative; display: flex; align-items: center; justify-content: center; gap: 9px; height: 24px; }
.panel.text .panel-name { padding-right: 18px; }
.launch { position: absolute; right: 4px; top: 8px; }

.options { display: flex; flex: none; align-items: center; height: 35px; margin: 0 3px; padding-bottom: 1px; background: #e3efd6; border-bottom: 2px solid #c9c9c9; color: #111; }
.ctx { font-weight: inherit; width: 61px; height: 26px; padding-left: 12px; line-height: 24px; border-right: 1px solid #a8ad9f; }
.check { display: flex; align-items: center; gap: 4px; margin-left: 13px; }
.prefer { display: flex; align-items: center; gap: 3px; margin-left: 24px; }
.prefer select, .filter select { appearance: none; border: 1px solid #bcbcbc; padding: 0 24px 0 4px; height: 28px; background: #e1e1e1 url("data:image/svg+xml,%3Csvg xmlns='http://www.w3.org/2000/svg' viewBox='0 0 12 8'%3E%3Cpath d='M1 1l5 5 5-5' fill='none' stroke='%23555' stroke-width='1.200'/%3E%3C/svg%3E") right 4px center / 10px 7px no-repeat; }
.prefer select { width: 143px; }

.work { flex: 1; display: flex; min-height: 0; }
.browser { flex: none; width: 307px; margin-left: 3px; display: flex; flex-direction: column; background: #eee; padding: 0 4px 3px 2px; border-right: 1px solid #c4c4c4; }
.dock-head { display: flex; flex: none; justify-content: space-between; align-items: center; height: 24px; padding: 0 2px 2px; white-space: nowrap; color: #444; }
.tree { flex: 1; margin: 0; padding: 0; list-style: none; background: #fff; color: #111; }
.tree li { display: flex; align-items: center; height: 22px; margin-left: -2px; }
.cell { overflow: visible; }
.ticon { margin-left: 2px; position: relative; background: #fff; }
.node { margin-left: 5px; padding: 0 4px 2px; line-height: 20px; white-space: nowrap; position: relative; }
.ticon + .node { margin-left: 3px; }
.node.active { background: #e2e2e2; font-weight: 500; }

.props { flex: none; width: 309px; display: flex; flex-direction: column; background: #eee; padding: 0 3px 0 2px; border-right: 2px solid #c4c4c4; border-left: 1px solid #c4c4c4; }
.type { flex: none; height: 94px; border: 1px solid #ccc; border-top: 2px solid #000; border-bottom: 2px solid #000; justify-content: flex-start; gap: 6px; padding: 0 1px 0 3px; text-align: left; color: #444; }
.thumb { width: 82px; height: 82px; border: 1px solid #ccc; }
.type-name { flex: 1; padding-bottom: 2px; }
.filter { display: flex; flex: none; height: 29px; align-items: center; gap: 6px; }
.filter select { width: 201px; border-color: #999; }
.edit { gap: 5px; color: #111; padding-bottom: 4px; }
.grid { width: 100%; flex: none; border-collapse: collapse; table-layout: fixed; background: #fff; color: #111; line-height: 20px; }
.grid th, .grid td { height: 24px; padding: 0 0 3px 2px; text-align: left; font-weight: inherit; border-bottom: 1px dotted #888; white-space: nowrap; }
.grid th { padding-left: 12px; }
.grid td { border-left: 1px dotted #888; border-right: 1px dotted #888; }
.grid .grp th, .grid .grp td { background: #dadada; border: 0; padding-left: 3px; }
.grid .dim { color: #777; }
.grid td.focus { border: 1px solid #000; }
.focus input { display: block; margin-top: 3px; }
.c1 { width: 143px; }
.c3 { width: 16px; }
.void { flex: 1; background: #fff; }
.apply { display: flex; flex: none; align-items: flex-start; justify-content: space-between; height: 33px; padding: 3px 2px 0 0; }
.apply a { color: #1268c8; text-decoration: none; border-bottom: 1px solid #1268c8; line-height: 18px; }
.apply button { width: 98px; height: 24px; background: #ccc; border: 1px solid #bbb; color: #888; }

.view { flex: 1; min-width: 0; display: grid; grid-template-columns: 1fr 20px; grid-template-rows: 25px 1fr 21px; margin-right: 3px; background: #efefef; border-right: 3px solid #fff; border-bottom: 3px solid #fff; }
.doc-tabs { grid-column: 1 / 3; display: flex; background: #cbcbcb; margin-right: -3px; padding-right: 7px; }
.doc { display: flex; align-items: center; justify-content: flex-start; gap: 11px; width: 160px; padding: 0 6px 1px; color: #222; }
.doc span { padding-bottom: 2px; }
.doc.open { background: #fff; font-weight: 400; }
.doc.open .x { margin-left: auto; }
.doc-more { margin-left: auto; }
.stage { position: relative; display: flex; background: #fff; min-height: 0; min-width: 0; }
.drawing { flex: 1 1 0; width: 0; min-width: 0; height: 100%; }
.ref-line path { stroke: #9cc99c; stroke-dasharray: 26 25.500; }
.ref-line .solid { stroke-dasharray: none; }
.dim-line path { stroke: #a0a0a0; }
.dim-text { font: 300 23px 'Liberation Sans', 'Noto Sans CJK KR', sans-serif; fill: #a0a0a0; text-anchor: middle; }
.crisp { shape-rendering: crispEdges; }
.dia { font: 21px 'Liberation Sans', sans-serif; fill: #0a3cb8; text-anchor: middle; }
.navbar { position: absolute; right: 1px; top: 2px; width: 36px; height: 118px; border-radius: 6px; background: #f3f3f3; box-shadow: inset 0 0 0 2px #c2c2c2; }
.two-d { font: 700 11px 'Liberation Sans', sans-serif; fill: #4b93d6; stroke: none; }
.vscroll { display: flex; flex-direction: column; align-items: center; justify-content: space-between; padding: 8px 0; }
.vthumb { width: 20px; height: 20px; background: #c4c4c4; }
.viewbar { display: flex; align-items: center; height: 21px; padding: 0 8px 2px 36px; }
.scale { width: 69px; justify-content: flex-start; }
.vbtn { width: 28px; }
.lt { margin-left: 4px; }
.hscroll { flex: 1; display: flex; justify-content: center; }
.hthumb { width: 20px; height: 19px; background: #c4c4c4; }
.grip { align-self: end; margin: 0 0 2px 6px; }

.status { display: flex; flex: none; align-items: center; height: 32px; margin: 0 3px 2px 2px; padding-bottom: 1px; border-bottom: 1px solid #000; color: #111; }
.hint { margin: 0 auto 0 4px; padding-bottom: 1px; width: 727px; overflow: hidden; white-space: nowrap; }
.status-icons { display: flex; gap: 10px; }
.sbtn { width: 20px; }
.count { margin: 0 101px 0 0; }

.marker { position: absolute; left: 172px; top: 26px; width: 142px; height: 186px; border: 10px solid #ff4343; filter: drop-shadow(1px 3px 3px rgba(0, 0, 0, 0.5)); pointer-events: none; }
</style>
